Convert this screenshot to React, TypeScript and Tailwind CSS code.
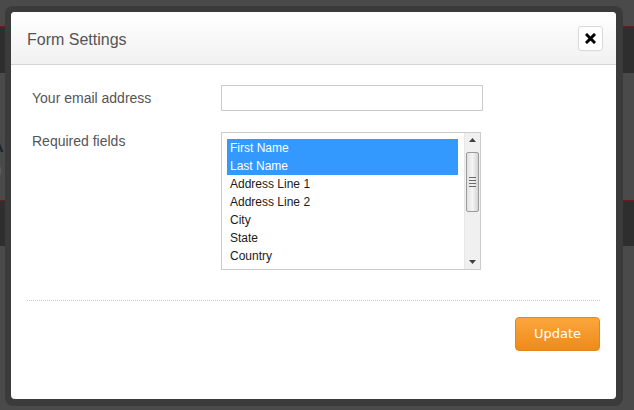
import React from "react";

const items = [
  "First Name",
  "Last Name",
  "Address Line 1",
  "Address Line 2",
  "City",
  "State",
  "Country",
];

function CloseIcon() {
  return (
    <svg width="11" height="11" viewBox="0 0 11 11">
      <path d="M2 2 L9 9 M9 2 L2 9" stroke="#000" strokeWidth="3" strokeLinecap="square" />
    </svg>
  );
}

function Scrollbar() {
  return (
    <div className="flex w-[16px] flex-col bg-[#f0f0f0] border-l border-[#e6e6e6]">
      <div className="flex h-[14px] items-center justify-center">
        <svg width="7" height="4" viewBox="0 0 7 4">
          <path d="M0 4 L3.5 0 L7 4 Z" fill="#404040" />
        </svg>
      </div>
      <div className="flex flex-1 flex-col px-[1px]">
        <div className="mt-[5px] flex h-[60px] items-center justify-center rounded-[2px] border border-[#9a9a9a] bg-gradient-to-r from-[#e2e2e2] via-[#f4f4f4] to-[#d4d4d4]">
          <div className="flex flex-col gap-[2px]">
            <div className="h-px w-[7px] bg-[#6b6b6b]" />
            <div className="h-px w-[7px] bg-[#6b6b6b]" />
            <div className="h-px w-[7px] bg-[#6b6b6b]" />
            <div className="h-px w-[7px] bg-[#6b6b6b]" />
          </div>
        </div>
      </div>
      <div className="flex h-[14px] items-center justify-center">
        <svg width="7" height="4" viewBox="0 0 7 4">
          <path d="M0 0 L3.5 4 L7 0 Z" fill="#404040" />
        </svg>
      </div>
    </div>
  );
}

export default function App() {
  return (
    <div
      className="relative h-[410px] w-[634px] overflow-hidden bg-[#4a4a4a]"
      style={{ fontFamily: '"Liberation Sans", Arial, sans-serif' }}
    >
      {/* page behind overlay */}
      <div className="flex flex-col">
        <div className="mt-[26px] h-px bg-[#6a1c1c]" />
        <div className="h-[46px] bg-[#2e2e2e]" />
        <div className="mt-[58px] -ml-[14px] text-[26px] leading-[24px] text-[#1d2430]">A</div>
        <div className="-ml-[6px] mt-[9px] text-[14px] leading-[14px] text-[#5e5e5e]">0</div>
        <div className="mt-[22px] h-px bg-[#6a1c1c]" />
        <div className="h-[45px] bg-[#2e2e2e]" />
      </div>

      {/* dialog */}
      <div className="absolute left-[5px] top-[6px] h-[400px] w-[618px] rounded-[8px] bg-[#3b3b3b] p-[6px] pb-[7px] pr-[7px]">
        <div className="flex h-full flex-col rounded-[4px] bg-white">
          <div className="flex h-[53px] items-center justify-between rounded-t-[4px] border-b border-[#d4d4d4] bg-gradient-to-b from-white to-[#f1f1f1] pl-[16px] pr-[13px]">
            <span className="mt-[3px] text-[16px] text-[#555555]">Form Settings</span>
            <button className="mt-[1px] flex h-[25px] w-[25px] items-center justify-center rounded-[3px] border border-[#d9d9d9] bg-white">
              <CloseIcon />
            </button>
          </div>

          <div className="flex flex-col pl-[21px] pt-[20px]">
            <div className="flex items-center">
              <span className="w-[189px] text-[14px] text-[#555555]">Your email address</span>
              <input className="h-[26px] w-[262px] border border-[#cccccc] bg-white outline-none" />
            </div>
            <div className="mt-[21px] flex items-start">
              <span className="w-[189px] text-[14px] leading-[18px] text-[#555555]">Required fields</span>
              <div className="flex h-[138px] w-[260px] border border-[#cccccc] bg-white">
                <div className="flex-1 overflow-hidden pb-[4px] pl-[5px] pr-[6px] pt-[6px]">
                  {items.map((it, i) => (
                    <div
                      key={it}
                      className={
                        "h-[18px] pl-[3px] text-[12px] leading-[18px] " +
                        (i < 2 ? "bg-[#3399ff] text-white" : "text-[#1a1a1a]")
                      }
                    >
                      {it}
                    </div>
                  ))}
                </div>
                <Scrollbar />
              </div>
            </div>
          </div>

          <div className="mx-[16px] mt-[30px] border-t border-dotted border-[#c8c8c8]" />

          <div className="flex justify-end pr-[16px] pt-[16px]">
            <button
              className="h-[34px] w-[85px] rounded-[4px] border border-[#e5861a] bg-gradient-to-b from-[#fba63c] to-[#ef8a17] text-[13px] text-white"
              style={{ fontFamily: '"DejaVu Sans", Verdana, sans-serif' }}
            >
              Update
            </button>
          </div>
        </div>
      </div>
    </div>
  );
}
